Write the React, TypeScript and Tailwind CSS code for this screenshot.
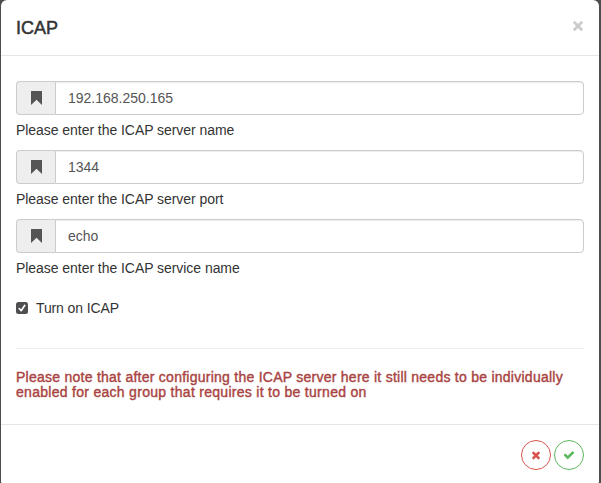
import React, { useState } from "react";

const TIMES =
  "M1490 1322q0 40-28 68l-136 136q-28 28-68 28t-68-28l-294-294-294 294q-28 28-68 28t-68-28l-136-136q-28-28-28-68t28-68l294-294-294-294q-28-28-28-68t28-68l136-136q28-28 68-28t68 28l294 294 294-294q28-28 68-28t68 28l136 136q28 28 28 68t-28 68l-294 294 294 294q28 28 28 68z";
const CHECK =
  "M1671 566q0 40-28 68l-724 724-136 136q-28 28-68 28t-68-28l-136-136-362-362q-28-28-28-68t28-68l136-136q28-28 68-28t68 28l294 295 656-657q28-28 68-28t68 28l136 136q28 28 28 68z";

function Glyph({ d, className }: { d: string; className: string }) {
  return (
    <svg viewBox="0 0 1792 1792" className={className} fill="currentColor" aria-hidden="true">
      <path d={d} />
    </svg>
  );
}

function Field({ initial, help }: { initial: string; help: string }) {
  const [value, setValue] = useState(initial);
  return (
    <div className="h-[69px]">
      <div className="flex h-[34px]">
        <span className="flex w-[39px] items-center justify-center rounded-l-[4px] border border-r-0 border-[#ccc] bg-[#eee] text-[#555]">
          <svg viewBox="0 0 11 14" className="h-[14px] w-[11px]" fill="currentColor" aria-hidden="true">
            <path d="M0 0H11V14L5.5 8.8L0 14Z" />
          </svg>
        </span>
        <input
          value={value}
          onChange={(e) => setValue(e.target.value)}
          aria-label={help}
          className="min-w-0 flex-1 rounded-r-[4px] border border-[#ccc] bg-white px-3 text-[14px] leading-5 text-[#555] shadow-[inset_0_1px_1px_rgba(0,0,0,0.075)] outline-none"
        />
      </div>
      <p className="pt-[5px] leading-5 tracking-[-0.05px]">{help}</p>
    </div>
  );
}

export default function App() {
  const [on, setOn] = useState(true);
  return (
    <div className="h-[483px] w-[601px] overflow-hidden bg-[#4d4d4f] pl-px font-['Liberation_Sans',Arial,sans-serif] text-[14px] text-[#333]">
      <div className="flex h-[483px] w-[598px] flex-col rounded-t-[6px] rounded-b-[1px] bg-white">
        <header className="flex h-[56px] items-center justify-between border-b border-[#e5e5e5] px-[15px]">
          <h4 className="text-[18px] leading-5 [-webkit-text-stroke:0.5px_#333]">ICAP</h4>
          <button aria-label="Close" className="-mt-[3px] text-[#ccc]">
            <svg viewBox="0 0 12 12" className="h-3 w-3" fill="none" stroke="currentColor" strokeWidth="2.8">
              <path d="M1.8 1.8L10.2 10.2M10.2 1.8L1.8 10.2" />
            </svg>
          </button>
        </header>
        <main className="h-[368px] px-[15px] pt-[25px]">
          <Field initial="192.168.250.165" help="Please enter the ICAP server name" />
          <Field initial="1344" help="Please enter the ICAP server port" />
          <Field initial="echo" help="Please enter the ICAP service name" />
          <label className="mt-[10px] flex h-5 items-center gap-2">
            <input type="checkbox" className="sr-only" checked={on} onChange={() => setOn(!on)} />
            <span className="flex h-3 w-3 items-center justify-center rounded-[2.5px] bg-[#4f4f51]">
              {on && (
                <svg viewBox="0 0 12 12" className="h-3 w-3" fill="none" stroke="white" strokeWidth="1.6" strokeLinecap="round" strokeLinejoin="round">
                  <path d="M3.2 6.5L5.2 8.7L8.8 3.3" />
                </svg>
              )}
            </span>
            <span className="tracking-[-0.12px]">Turn on ICAP</span>
          </label>
          <hr className="mt-[30px] border-[#eee]" />
          <h5 className="mt-[21px] whitespace-nowrap leading-[15px] text-[#a94442] [-webkit-text-stroke:0.4px_#a94442]">
            <span className="block tracking-[0.255px]">Please note that after configuring the ICAP server here it still needs to be individually</span>
            <span className="block tracking-[0.29px]">enabled for each group that requires it to be turned on</span>
          </h5>
        </main>
        <footer className="flex h-[59px] justify-end gap-[3px] border-t border-[#e5e5e5] px-[15px] pt-[15px]">
          <button aria-label="Cancel" className="flex h-[30px] w-[30px] items-center justify-center rounded-full border border-[#d9534f] text-[#d9534f]">
            <Glyph d={TIMES} className="h-3 w-3" />
          </button>
          <button aria-label="Save" className="flex h-[30px] w-[30px] items-center justify-center rounded-full border border-[#5cb85c] text-[#5cb85c]">
            <Glyph d={CHECK} className="h-3 w-3" />
          </button>
        </footer>
      </div>
    </div>
  );
}
